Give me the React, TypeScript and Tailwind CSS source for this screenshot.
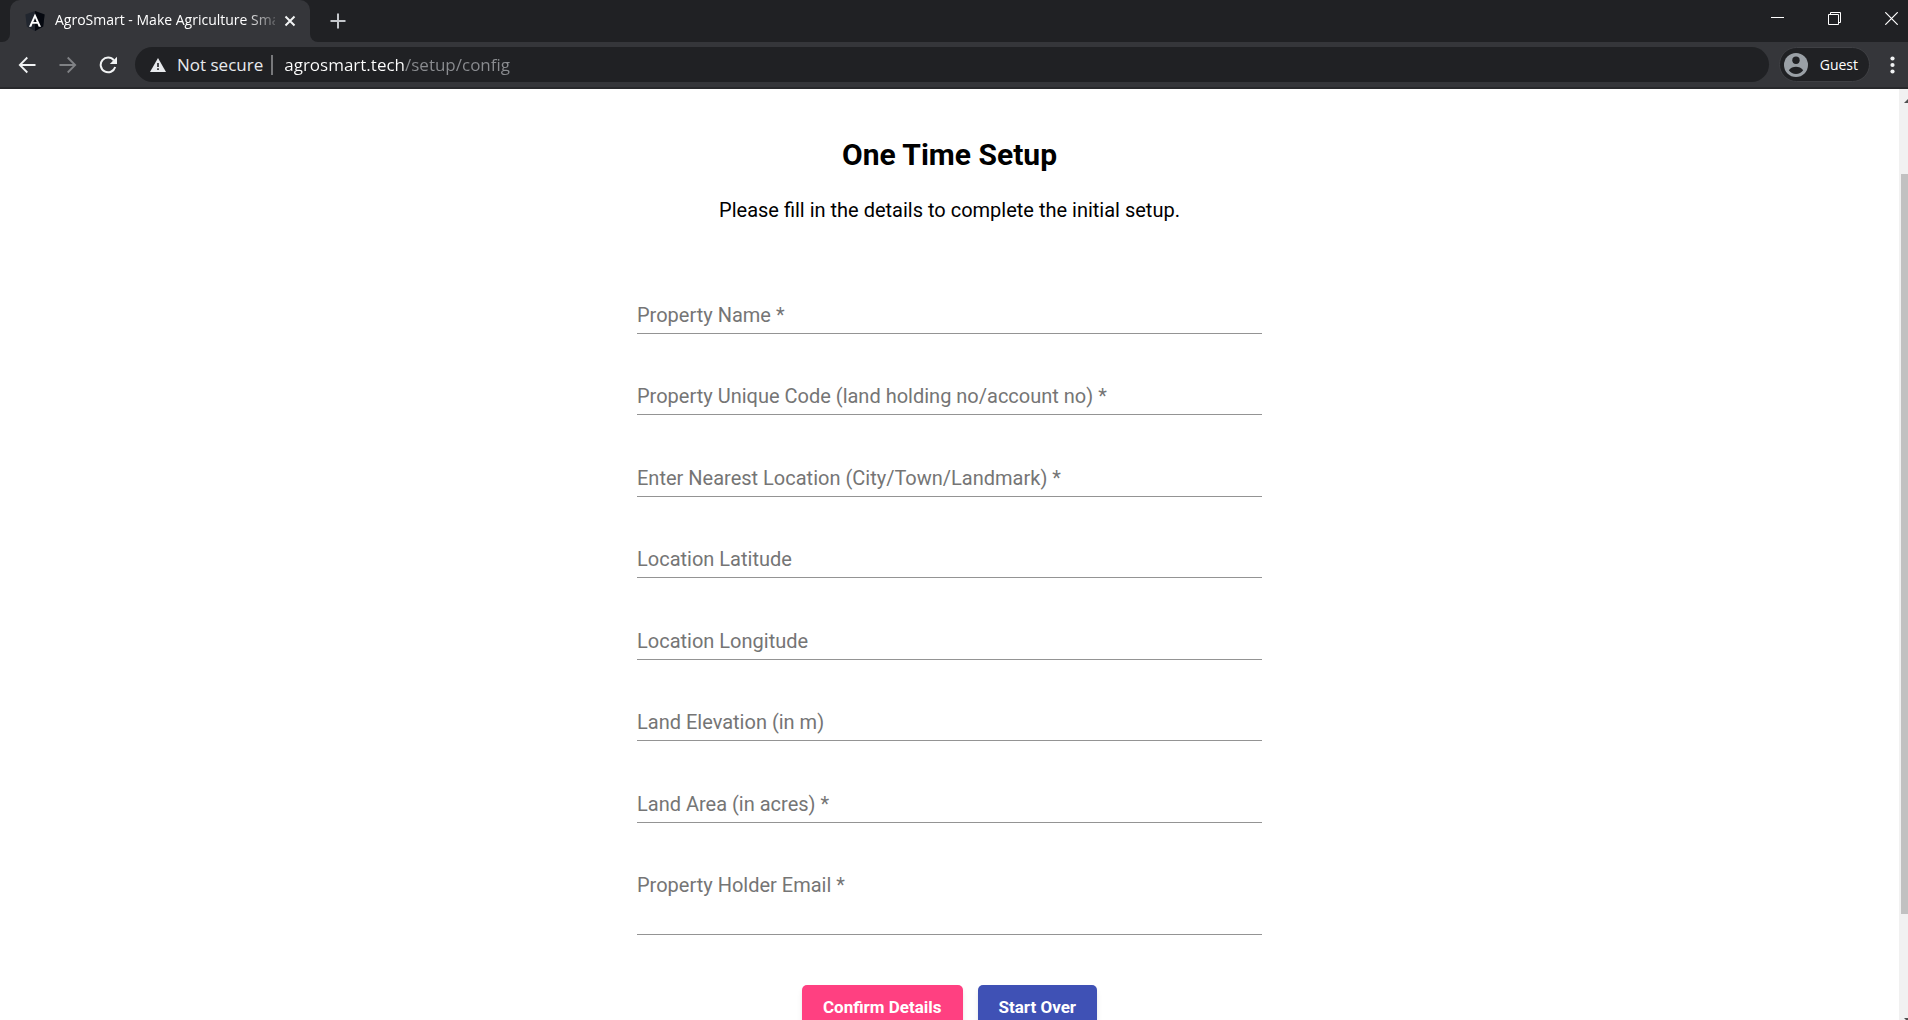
import { useState } from "react";

type FieldSpec = { id: string; label: string; type?: string };

const fields: FieldSpec[] = [
  { id: "property-name", label: "Property Name *" },
  { id: "property-code", label: "Property Unique Code (land holding no/account no) *" },
  { id: "nearest-location", label: "Enter Nearest Location (City/Town/Landmark) *" },
  { id: "latitude", label: "Location Latitude" },
  { id: "longitude", label: "Location Longitude" },
  { id: "elevation", label: "Land Elevation (in m)" },
  { id: "area", label: "Land Area (in acres) *" },
];

function TextField({ id, label }: FieldSpec) {
  const [value, setValue] = useState("");
  return (
    <div className="grid content-end border-b border-[#949494]">
      <label
        htmlFor={id}
        className={
          value
            ? "invisible col-start-1 row-start-1"
            : "pointer-events-none z-10 col-start-1 row-start-1 pb-[6px] text-[20px] leading-6 text-[#757575]"
        }
      >
        {label}
      </label>
      <input
        id={id}
        value={value}
        onChange={(e) => setValue(e.target.value)}
        className="col-start-1 row-start-1 w-full bg-transparent pb-[6px] text-[20px] leading-6 outline-none"
      />
    </div>
  );
}

function AngularShield() {
  return (
    <svg width="20" height="20" viewBox="0 0 20 20" className="shrink-0" aria-hidden="true">
      <path d="M10 0 19.6 3.4 18.2 15.6 10 20 1.8 15.6.4 3.4Z" fill="#21262f" />
      <path d="M10 0 19.6 3.4 18.2 15.6 10 20Z" fill="#05080f" />
      <path
        d="M10 2.6 4 15.8h2.3l1.2-3h5l1.2 3H16Zm0 4.4 1.7 4H8.3Z"
        fill="#ffffff"
        fillRule="evenodd"
      />
    </svg>
  );
}

function TabStrip() {
  return (
    <div className="flex h-[42px] items-stretch bg-[#202124]">
      <div className="flex w-[10px] bg-[#35363a]">
        <div className="flex-1 rounded-br-lg bg-[#202124]" />
      </div>
      <div className="flex w-[300px] items-center rounded-t-[10px] bg-[#35363a] pr-[14px] pl-[15px]">
        <AngularShield />
        <span className="ml-[10px] flex-1 overflow-hidden [mask-image:linear-gradient(to_right,black_86%,transparent_104%)] pb-[2px] text-[14px] leading-5 whitespace-nowrap text-white">
          AgroSmart - Make Agriculture Smart
        </span>
        <button aria-label="Close tab" className="ml-[9px] shrink-0">
          <svg width="12" height="12" viewBox="0 0 12 12" stroke="#f1f3f4" strokeWidth="2">
            <path d="M1.5 1.5 10.5 10.5M10.5 1.5 1.5 10.5" />
          </svg>
        </button>
      </div>
      <div className="flex w-[10px] bg-[#35363a]">
        <div className="flex-1 rounded-bl-lg bg-[#202124]" />
      </div>
      <button aria-label="New tab" className="ml-[10px]">
        <svg width="16" height="16" viewBox="0 0 16 16" stroke="#c4c7cb" strokeWidth="2">
          <path d="M8 .5V15.500M.5 8H15.500" />
        </svg>
      </button>
      <div className="ml-auto flex items-start gap-[44px] pt-3 pr-[10px]">
        <button aria-label="Minimize">
          <svg width="13" height="13" viewBox="0 0 13 13" stroke="#ffffff">
            <path d="M0 5.500H13" />
          </svg>
        </button>
        <button aria-label="Restore">
          <svg width="13" height="13" viewBox="0 0 13 13" fill="none" stroke="#ffffff">
            <path d="M.5 2.500h10v10h-10ZM2.500 2.500v-2h10v10h-2" />
          </svg>
        </button>
        <button aria-label="Close window">
          <svg width="13" height="13" viewBox="0 0 13 13" stroke="#ffffff" strokeWidth="1.200">
            <path d="M.3.3 12.700 12.700M12.700.3.3 12.700" />
          </svg>
        </button>
      </div>
    </div>
  );
}

function Toolbar() {
  return (
    <div className="flex h-[47px] items-center border-b-2 border-[#28292c] bg-[#35363a] pl-[18px]">
      <button aria-label="Back">
        <svg width="18" height="18" viewBox="0 0 18 18" fill="none" stroke="#f1f3f4" strokeWidth="1.800">
          <path d="M17.500 9H2M9.300 1.500 1.800 9l7.500 7.500" />
        </svg>
      </button>
      <button aria-label="Forward" className="ml-[23px]">
        <svg width="18" height="18" viewBox="0 0 18 18" fill="none" stroke="#808285" strokeWidth="1.800">
          <path d="M.5 9H16M8.700 1.500 16.200 9l-7.500 7.500" />
        </svg>
      </button>
      <button aria-label="Reload" className="ml-[22px]">
        <svg width="18" height="18" viewBox="0 0 18 18" fill="none" stroke="#f1f3f4" strokeWidth="2">
          <path d="M14.900 4.300A7.400 7.400 0 1 0 16.200 11" />
          <path d="M18 .8V8H10.800Z" fill="#f1f3f4" stroke="none" />
        </svg>
      </button>
      <div className="ml-[18px] flex h-[35px] min-w-0 flex-1 items-center rounded-full bg-[#202124] pl-[15px]">
        <svg width="16" height="14" viewBox="0 0 16 14" className="shrink-0" aria-hidden="true">
          <path d="M8 0 16 14H0Z" fill="#e8eaed" />
          <path d="M7.200 5h1.600v4H7.200ZM7.200 10.300h1.600v1.700H7.200Z" fill="#202124" />
        </svg>
        <button className="ml-[11px] text-[17px] leading-6 whitespace-nowrap text-[#e8eaed]">Not secure</button>
        <span className="ml-2 h-5 w-[2px] shrink-0 bg-[#77787b]" />
        <input
          aria-label="Address and search bar"
          defaultValue="agrosmart.tech/setup/config"
          spellCheck={false}
          className="ml-[11px] min-w-0 flex-1 bg-[linear-gradient(to_right,#ffffff_121px,#8a8c90_121px)] bg-clip-text text-[17px] leading-6 text-transparent outline-none"
        />
      </div>
      <button className="ml-[10px] flex h-[35px] items-center rounded-full border border-[#3f4044] bg-[#202124] pr-[11px] pl-[4px] text-[14px] text-white">
        <svg width="24" height="24" viewBox="0 0 24 24" aria-hidden="true">
          <circle cx="12" cy="12" r="12" fill="#9aa0a6" />
          <circle cx="12" cy="7.300" r="3.700" fill="#202124" />
          <path d="M4.800 17.300c1.500-2.400 4.700-3.500 7.200-3.500s5.700 1.100 7.200 3.500a8.700 8.700 0 0 1-14.400 0Z" fill="#202124" />
        </svg>
        <span className="ml-3">Guest</span>
      </button>
      <button aria-label="Browser menu" className="mr-[13px] ml-[20px]">
        <svg width="5" height="18" viewBox="0 0 5 18" fill="#f1f3f4">
          <circle cx="2.500" cy="2.500" r="2.100" />
          <circle cx="2.500" cy="9" r="2.100" />
          <circle cx="2.500" cy="15.500" r="2.100" />
        </svg>
      </button>
    </div>
  );
}

function Scrollbar() {
  return (
    <div className="relative flex w-[9px] shrink-0 flex-col overflow-hidden bg-[#f1f1f1] pl-[2px]">
      <div className="grow-[85]" />
      <div className="grow-[740] bg-[#c1c1c1]" />
      <div className="grow-[106]" />
      <svg width="4" height="4" viewBox="0 0 4 4" className="absolute top-[10px] right-0" fill="#505050" aria-hidden="true">
        <path d="M0 4 4 0V4Z" />
      </svg>
      <svg width="4" height="4" viewBox="0 0 4 4" className="absolute right-0 -bottom-[2px]" fill="#505050" aria-hidden="true">
        <path d="M0 0H4V4Z" />
      </svg>
    </div>
  );
}

export default function App() {
  return (
    <div className="flex h-screen flex-col overflow-hidden bg-white">
      <header className="shrink-0 font-['Open_Sans',sans-serif]">
        <TabStrip />
        <Toolbar />
      </header>
      <div className="flex min-h-0 flex-1">
        <main className="min-w-0 flex-1 overflow-hidden px-4 pt-[46px] font-[Roboto,sans-serif] text-black">
          <h1 className="text-center text-[30px] leading-10 font-bold">One Time Setup</h1>
          <p className="mt-[23px] text-center text-[20px] leading-6">
            Please fill in the details to complete the initial setup.
          </p>
          <form className="mx-auto mt-[30px] max-w-[625px]" onSubmit={(e) => e.preventDefault()}>
            <div className="grid min-h-[571px] auto-rows-fr">
              {fields.map((field) => (
                <TextField key={field.id} {...field} />
              ))}
            </div>
            <div className="mt-[50px] grid border-b border-[#949494]">
              <label
                htmlFor="email"
                className="pointer-events-none z-10 col-start-1 row-start-1 self-start text-[20px] leading-6 text-[#757575]"
              >
                Property Holder Email *
              </label>
              <textarea
                id="email"
                className="col-start-1 row-start-1 h-[61px] w-full resize-none bg-transparent text-[20px] leading-6 outline-none"
              />
            </div>
            <div className="mt-[50px] flex justify-center gap-[15px]">
              <button
                type="submit"
                className="h-[45px] rounded-[5px] bg-[#ff4081] px-[21px] text-[17px] font-bold text-white shadow-md"
              >
                Confirm Details
              </button>
              <button
                type="reset"
                className="h-[45px] rounded-[5px] bg-[#3f51b5] px-[21px] text-[17px] font-bold text-white shadow-md"
              >
                Start Over
              </button>
            </div>
          </form>
        </main>
        <Scrollbar />
      </div>
    </div>
  );
}
